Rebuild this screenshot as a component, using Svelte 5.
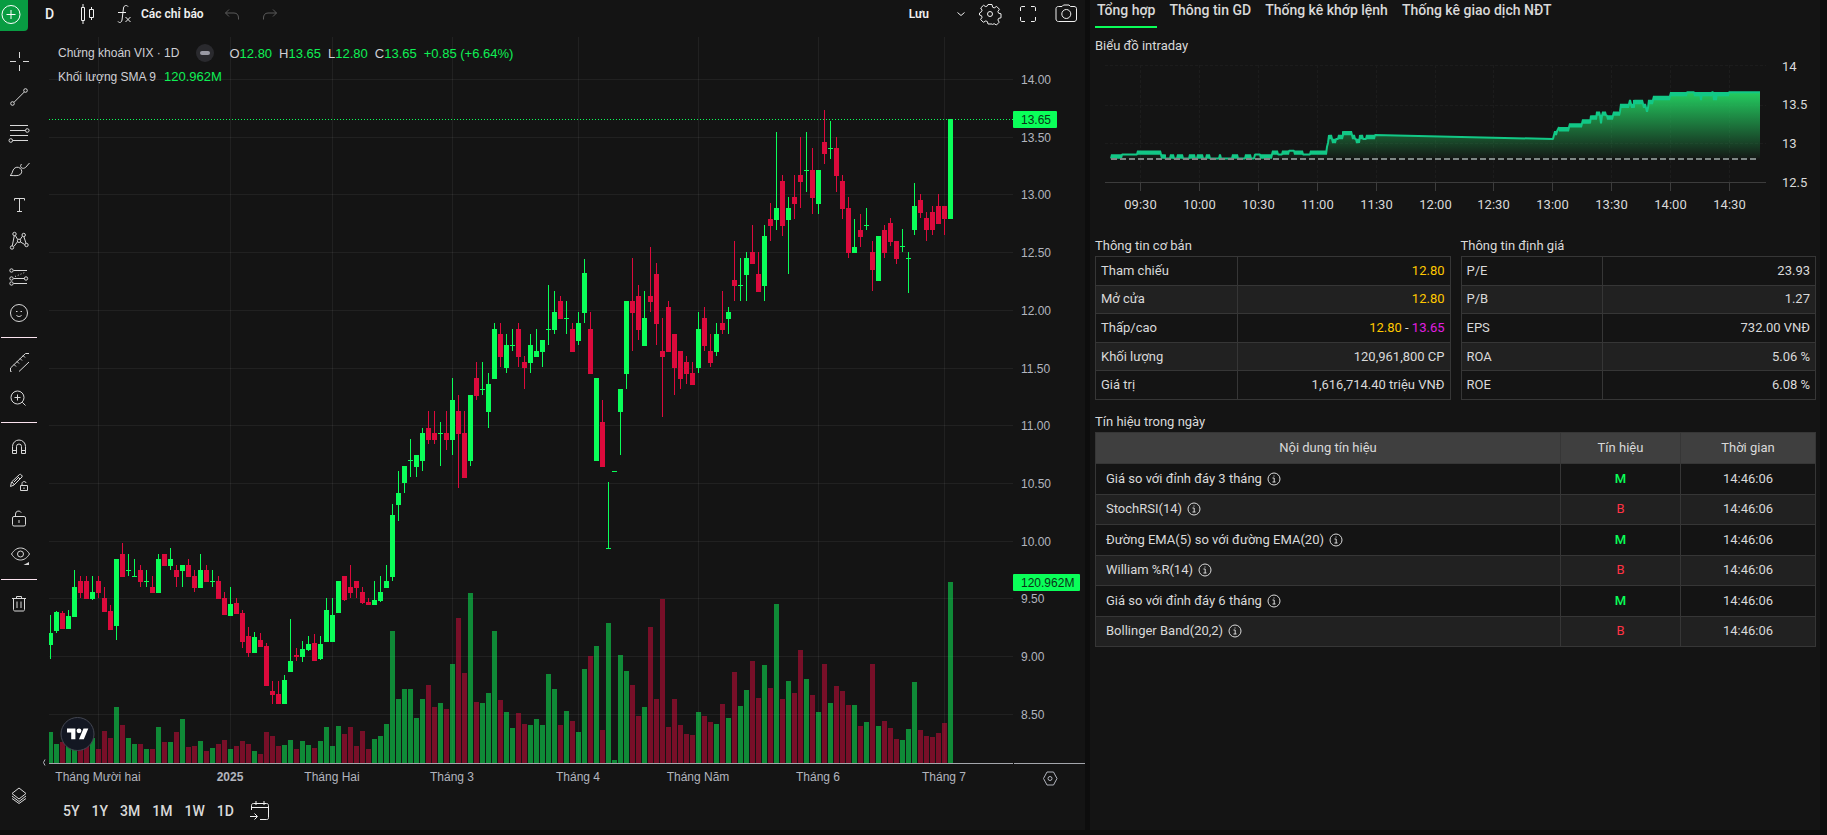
<script lang="ts">
	type Candle = [up: number, high: number, top: number, bottom: number, low: number, volume: number];

	const candles: Candle[] = [
		[1, 615, 633, 645, 659, 732], [1, 611, 612, 631, 633, 744], [0, 611, 613, 629, 629, 742], [1, 610, 616, 629, 629, 738],
		[1, 570, 587, 617, 617, 746], [0, 576, 581, 593, 598, 748], [0, 576, 581, 599, 599, 744], [1, 576, 592, 599, 600, 738],
		[0, 576, 581, 593, 598, 749], [0, 587, 598, 612, 612, 731], [0, 605, 611, 630, 630, 738], [1, 559, 559, 626, 640, 707],
		[0, 543, 554, 577, 577, 725], [1, 554, 570, 571, 576, 738], [1, 559, 576, 577, 577, 744], [0, 565, 570, 582, 587, 744],
		[1, 570, 581, 582, 587, 749], [0, 576, 587, 593, 593, 749], [1, 554, 559, 593, 593, 727], [0, 554, 554, 566, 566, 742],
		[1, 548, 559, 566, 570, 742], [0, 565, 570, 577, 587, 732], [1, 565, 565, 571, 587, 719], [0, 559, 565, 577, 577, 747],
		[0, 570, 576, 588, 592, 746], [1, 554, 570, 588, 588, 741], [0, 565, 570, 582, 582, 751], [1, 570, 581, 582, 587, 748],
		[0, 576, 581, 599, 599, 744], [0, 592, 598, 615, 615, 740], [1, 587, 604, 616, 616, 749], [0, 598, 603, 614, 614, 746],
		[0, 610, 613, 642, 648, 741], [0, 627, 636, 653, 657, 744], [1, 632, 637, 653, 653, 751], [0, 633, 640, 647, 647, 754],
		[0, 643, 646, 686, 686, 732], [0, 681, 691, 695, 704, 736], [0, 681, 694, 704, 704, 746], [1, 675, 680, 704, 704, 745],
		[1, 619, 661, 672, 672, 740], [0, 648, 655, 657, 661, 749], [1, 641, 649, 657, 662, 741], [1, 636, 644, 650, 651, 745],
		[0, 634, 643, 661, 661, 748], [1, 636, 644, 659, 660, 741], [1, 598, 610, 642, 642, 727], [1, 598, 615, 642, 642, 746],
		[1, 581, 581, 613, 613, 726], [0, 576, 576, 600, 601, 734], [0, 565, 587, 593, 598, 727], [0, 581, 581, 588, 598, 746],
		[0, 587, 592, 603, 604, 731], [0, 598, 602, 605, 605, 749], [1, 581, 600, 605, 605, 739], [1, 576, 592, 601, 602, 736],
		[1, 565, 581, 588, 588, 724], [1, 504, 515, 577, 581, 631], [1, 471, 493, 505, 521, 699], [1, 466, 466, 483, 493, 689],
		[1, 439, 460, 461, 477, 689], [1, 455, 455, 467, 477, 718], [1, 428, 433, 461, 471, 699], [0, 411, 428, 440, 444, 685],
		[0, 411, 433, 440, 444, 707], [1, 422, 433, 434, 466, 703], [0, 411, 433, 440, 450, 709], [1, 378, 400, 440, 455, 664],
		[0, 395, 411, 434, 488, 618], [0, 411, 433, 478, 478, 673], [1, 395, 395, 461, 466, 593], [0, 362, 378, 396, 400, 702],
		[1, 362, 389, 390, 395, 703], [1, 373, 384, 412, 428, 693], [1, 323, 329, 379, 379, 631], [0, 323, 334, 357, 367, 700],
		[1, 334, 345, 368, 373, 712], [1, 329, 345, 346, 351, 728], [0, 323, 329, 357, 367, 713], [0, 356, 362, 368, 389, 724],
		[1, 334, 345, 363, 373, 725], [1, 329, 351, 357, 357, 719], [1, 340, 340, 352, 367, 725], [1, 285, 329, 330, 345, 674],
		[1, 291, 312, 330, 334, 689], [0, 296, 301, 319, 319, 725], [1, 301, 318, 319, 334, 711], [0, 323, 329, 352, 352, 721],
		[1, 312, 323, 341, 345, 732], [1, 259, 273, 313, 323, 669], [0, 312, 329, 374, 374, 656], [1, 378, 378, 461, 461, 646],
		[0, 400, 422, 467, 467, 730], [1, 482, 548, 549, 549, 623], [1, 471, 471, 472, 472, 760], [1, 389, 389, 412, 455, 655],
		[1, 301, 301, 374, 389, 671], [0, 258, 301, 313, 351, 685], [0, 285, 296, 330, 340, 716], [1, 291, 318, 346, 346, 707],
		[0, 247, 296, 302, 312, 627], [0, 263, 274, 324, 345, 699], [0, 318, 351, 357, 417, 599], [0, 301, 307, 352, 352, 727],
		[0, 334, 334, 368, 395, 699], [0, 351, 351, 379, 389, 725], [0, 356, 362, 374, 384, 734], [0, 362, 373, 385, 385, 735],
		[1, 312, 329, 368, 373, 712], [0, 307, 318, 346, 351, 716], [0, 334, 351, 363, 367, 722], [1, 323, 334, 352, 356, 724],
		[0, 291, 323, 330, 334, 704], [1, 307, 312, 319, 334, 718], [0, 241, 280, 286, 301, 672], [1, 258, 285, 286, 301, 706],
		[1, 252, 258, 275, 301, 690], [0, 225, 252, 264, 264, 661], [0, 252, 274, 292, 292, 698], [1, 225, 236, 286, 301, 665],
		[0, 203, 219, 226, 241, 688], [1, 132, 208, 220, 230, 604], [0, 175, 181, 226, 236, 699], [1, 197, 208, 220, 274, 681],
		[0, 175, 197, 204, 219, 693], [0, 137, 175, 182, 208, 650], [1, 132, 170, 171, 192, 679], [0, 148, 170, 198, 214, 695],
		[1, 170, 170, 204, 214, 712], [0, 110, 142, 154, 164, 664], [1, 121, 148, 149, 159, 703], [0, 137, 148, 176, 192, 686],
		[0, 175, 181, 209, 219, 691], [0, 197, 208, 253, 258, 705], [1, 219, 247, 253, 253, 705], [0, 214, 230, 237, 247, 726],
		[1, 208, 225, 226, 230, 722], [0, 241, 252, 270, 291, 664], [1, 236, 236, 281, 281, 726], [0, 225, 230, 253, 258, 721],
		[0, 218, 223, 242, 246, 728], [0, 241, 241, 259, 264, 739], [1, 229, 246, 247, 252, 740], [1, 252, 258, 259, 293, 729],
		[1, 183, 206, 230, 235, 682], [0, 194, 200, 213, 218, 730], [0, 212, 218, 230, 241, 736], [0, 206, 212, 230, 235, 737],
		[0, 194, 206, 224, 224, 733], [0, 206, 206, 219, 235, 723], [1, 119, 119, 219, 219, 582]
	];

	const priceTicks = [
		{ y: 79, label: '14.00' },
		{ y: 137, label: '13.50' },
		{ y: 194, label: '13.00' },
		{ y: 252, label: '12.50' },
		{ y: 310, label: '12.00' },
		{ y: 368, label: '11.50' },
		{ y: 425, label: '11.00' },
		{ y: 483, label: '10.50' },
		{ y: 541, label: '10.00' },
		{ y: 598, label: '9.50' },
		{ y: 656, label: '9.00' },
		{ y: 714, label: '8.50' }
	];

	const months = [
		{ x: 98, label: 'Tháng Mười hai' },
		{ x: 230, label: '2025', bold: true },
		{ x: 332, label: 'Tháng Hai' },
		{ x: 452, label: 'Tháng 3' },
		{ x: 578, label: 'Tháng 4' },
		{ x: 698, label: 'Tháng Năm' },
		{ x: 818, label: 'Tháng 6' },
		{ x: 944, label: 'Tháng 7' }
	];

	const ohlc = [
		['O', '12.80'],
		['H', '13.65'],
		['L', '12.80'],
		['C', '13.65']
	];

	const ranges = ['5Y', '1Y', '3M', '1M', '1W', '1D'];
	const tabs = ['Tổng hợp', 'Thông tin GD', 'Thống kê khớp lệnh', 'Thống kê giao dịch NĐT'];
	let activeTab = $state(0);

	// [from x, to x, ticks above reference, alternate tick]
	const morning = [
		[1111, 1122, 0, 1], [1122, 1137, 1, 1], [1137, 1161, 1, 2], [1162, 1165, 0, 1], [1165, 1170, 0, 0],
		[1171, 1174, 1, 0], [1174, 1177, 0, 0], [1178, 1182, 1, 0], [1183, 1189, 0, 0], [1190, 1194, 1, 0],
		[1195, 1197, 0, 0], [1198, 1203, 1, 0], [1204, 1206, 0, 0], [1207, 1209, 1, 0], [1210, 1219, 0, 0],
		[1220, 1221, 1, 0], [1222, 1232, 0, 0], [1233, 1238, 1, 0], [1239, 1245, 0, 0], [1246, 1251, 1, 0],
		[1252, 1254, 0, 0], [1255, 1260, 1, 1], [1261, 1272, 0, 1], [1273, 1278, 2, 1], [1279, 1282, 1, 1],
		[1283, 1288, 2, 1], [1289, 1294, 2, 2], [1295, 1302, 1, 2], [1303, 1310, 1, 1], [1311, 1326, 2, 1],
		[1327, 1328, 3, 4], [1329, 1332, 6, 5], [1333, 1335, 4, 5], [1336, 1338, 5, 5], [1339, 1343, 6, 5],
		[1343, 1351, 7, 6], [1352, 1355, 6, 5], [1356, 1359, 5, 4], [1360, 1363, 6, 5], [1364, 1366, 5, 5],
		[1367, 1375, 6, 5]
	];
	const afternoon = [
		[1553, 1554, 5, 6], [1555, 1557, 7, 6], [1559, 1569, 8, 7], [1570, 1582, 9, 8], [1583, 1590, 10, 9],
		[1591, 1596, 11, 10], [1597, 1599, 12, 11], [1600, 1602, 11, 9], [1603, 1606, 12, 11], [1607, 1613, 11, 10],
		[1614, 1620, 12, 11], [1621, 1629, 14, 13], [1630, 1631, 15, 14], [1632, 1634, 13, 14], [1634, 1642, 15, 14],
		[1643, 1645, 14, 13], [1646, 1648, 13, 12], [1649, 1653, 15, 14], [1654, 1670, 16, 15], [1671, 1687, 17, 16],
		[1688, 1693, 17, 17], [1694, 1699, 17, 16], [1700, 1701, 17, 15], [1702, 1712, 17, 16], [1713, 1716, 17, 15],
		[1717, 1728, 17, 16], [1729, 1760, 17, 17]
	];

	function tracePoints(list: number[][]) {
		const points: string[] = [];
		for (const [from, to, a, b] of list) {
			for (let x = from; x <= to; x++) {
				points.push(`${x},${158.5 - 3.9 * ((x - from) % 2 ? b : a)}`);
			}
		}
		return points.join(' ');
	}

	const intraday = tracePoints(morning) + ' ' + tracePoints(afternoon);

	const times = ['09:30', '10:00', '10:30', '11:00', '11:30', '12:00', '12:30', '13:00', '13:30', '14:00', '14:30'];
	const timeX = (i: number) => Math.round(1140 + i * 58.9) + 0.5;
	const levels = [
		{ y: 65, text: 71, label: '14' },
		{ y: 105, text: 109, label: '13.5' },
		{ y: 143, text: 148, label: '13' },
		{ y: 182, text: 187, label: '12.5' }
	];

	const valuation = [
		['P/E', '23.93'],
		['P/B', '1.27'],
		['EPS', '732.00 VNĐ'],
		['ROA', '5.06 %'],
		['ROE', '6.08 %']
	];

	const signals = [
		{ name: 'Giá so với đỉnh đáy 3 tháng', signal: 'M' },
		{ name: 'StochRSI(14)', signal: 'B' },
		{ name: 'Đường EMA(5) so với đường EMA(20)', signal: 'M' },
		{ name: 'William %R(14)', signal: 'B' },
		{ name: 'Giá so với đỉnh đáy 6 tháng', signal: 'M' },
		{ name: 'Bollinger Band(20,2)', signal: 'B' }
	];
</script>

{#snippet tool(label: string, shape: any)}
	<button class="tool" aria-label={label}>
		<svg class="icon" viewBox="0 0 28 28">{@render shape()}</svg>
	</button>
{/snippet}

{#snippet cross()}<path d="M14.5 5v6M14.5 18v6M5 14.5h6M18 14.5h6" />{/snippet}
{#snippet trend()}
	<path d="M9 19.3 19.3 9" />
	<circle cx="20.5" cy="7.5" r="1.8" /><circle cx="7.5" cy="20.5" r="1.8" />
{/snippet}
{#snippet fib()}
	<path d="M5 6.5h18M5 11.5h15.5M5 16.5h18M7.5 21.5H23" />
	<circle cx="22.3" cy="11.5" r="1.8" /><circle cx="5.8" cy="21.5" r="1.8" />
{/snippet}
{#snippet brush()}
	<path d="M5 20.5c2.4-1 2-4 3.7-6.4 1.6-2.2 4.5-2.5 6.5-.8s2 4.3.3 6c-2.3 2-6 1.2-10.5 1.2zM16.5 9c-1.5 1.5-1 4 .5 4M24.5 8l-4 4.5c-1.5 1-3 1-3.5.5" />
{/snippet}
{#snippet letter()}<path d="M9.5 9.5v-2h10v2M14.5 7.5v13M12 20.5h5" />{/snippet}
{#snippet pattern()}
	<path d="m7.3 18.8 2-10.2M10.3 8.5l2.4 4M15 12.8l2.3-3.5M18.9 9.8l2.2 6.7M9 19.3l3.5-4.5M15.2 14.8l4.5 2.7" />
	<circle cx="9.5" cy="7" r="1.7" /><circle cx="18.7" cy="8" r="1.7" /><circle cx="7" cy="20.5" r="1.7" />
	<circle cx="21.5" cy="18" r="1.7" /><circle cx="14" cy="13.8" r="1.7" />
{/snippet}
{#snippet forecast()}
	<path d="M8.5 7.5H22M8.5 15.5h11M8.5 20.5H22" />
	<path d="M10 13.5 21 9" stroke-dasharray="1 2" />
	<circle cx="6.5" cy="7.5" r="1.7" /><circle cx="6.5" cy="15.5" r="1.7" />
	<circle cx="6.5" cy="20.5" r="1.7" /><circle cx="21" cy="15.5" r="1.7" />
{/snippet}
{#snippet smile()}
	<circle cx="14" cy="14" r="8.5" />
	<path d="M11 12.5h1.5M15.5 12.5H17M11.5 16c.5 2 4.5 2 5 0" />
{/snippet}
{#snippet ruler()}
	<path d="M5.5 20 20.5 5.5H24M5.5 20v3.5h1M14 23.5 24 14M9 16.5l2 2M12 13.5l2 2M15 10.5l2 2M18 7.5l2 2" />
{/snippet}
{#snippet zoomIn()}
	<circle cx="12.5" cy="13.5" r="6.5" />
	<path d="m17.3 18.3 3.2 3.2M12.5 10.5v6M9.5 13.5h6" />
{/snippet}
{#snippet magnet()}
	<path d="M7.5 20.5v-7a6.5 6.5 0 0 1 13 0v7h-4v-7a2.5 2.5 0 0 0-5 0v7zM7.5 17.5h4M16.5 17.5h4" />
{/snippet}
{#snippet pencilLock()}
	<path d="M5.5 17.5 6.5 13 14.5 5.5c1-1 3.5 1.5 2.5 2.5l-8 8zM7 13l2.5 3M12.5 7.5l2.5 2.5M9 13l5-5" />
	<path d="M15.5 16.5h7v5h-7zM17 16.5v-2c0-2.5 4-2.5 4-.5M19 18.5v1.5" />
{/snippet}
{#snippet lock()}
	<rect x="7.5" y="11.5" width="13" height="9.5" rx="1.5" />
	<path d="M10.5 11.5V9a3 3 0 0 1 5.7-1.3M14 15v3" />
{/snippet}
{#snippet eye()}
	<path d="M6.5 13c2.5-4 5.5-6 9-6s6.5 2 9 6c-2.5 4-5.5 6-9 6s-6.5-2-9-6z" />
	<circle cx="15.5" cy="13" r="3" />
	<path d="m18.5 24 5.5-3v3z" fill="currentColor" stroke="none" />
{/snippet}
{#snippet trash()}
	<path d="M7 8.5h14M11.5 8.5v-2h5v2M8.5 8.5v11c0 1 .5 1.5 1.5 1.5h8c1 0 1.5-.5 1.5-1.5v-11M12 11.5v6.5M16 11.5v6.5" />
{/snippet}
{#snippet layers()}
	<path d="m7 11.5 7-5.5 7 5.5-7 5.5zM7 14l7 5.5 7-5.5M7 16.5l7 5 7-5" />
{/snippet}

<main>
	<section class="chart">
		<header class="toolbar">
			<button class="add" aria-label="Thêm mã">
				<svg class="icon" viewBox="0 0 28 28">
					<circle cx="11" cy="14.5" r="9" /><path d="M11 10v9M6.5 14.5h9" />
				</svg>
			</button>
			<button class="interval">D</button>
			<button aria-label="Kiểu biểu đồ">
				<svg class="icon" viewBox="0 0 28 28">
					<path d="M8.5 7.5h3v13h-3zM10 4v3.5M10 20.5V24M16.5 9.5h4v8h-4zM18.5 7v2.5M18.5 17.5V20" />
				</svg>
			</button>
			<button class="indicators">
				<svg class="icon" viewBox="0 0 28 28">
					<path d="M18 6.5c-1-1.5-4-1.5-4.5 1.5l-1.5 12c-.5 3-3 3-4 1.5M8 12.5h8" />
					<path d="m15.5 17 5 5M20.5 17l-5 5" />
				</svg>
				Các chỉ báo
			</button>
			<button class="history undo" aria-label="Hoàn tác">
				<svg class="icon" viewBox="0 0 28 28"><path d="M11 9.5 7.5 13l3.5 3.5M7.5 13H16c3 0 4.5 2 4.5 5v1.5" /></svg>
			</button>
			<button class="history" aria-label="Làm lại">
				<svg class="icon" viewBox="0 0 28 28"><path d="m17 9.5 3.5 3.5-3.5 3.5M20.5 13H12c-3 0-4.5 2-4.5 5v1.5" /></svg>
			</button>
			<button class="save">Lưu</button>
			<button class="more" aria-label="Mở danh sách">
				<svg class="icon" viewBox="7 0 14 28"><path d="m10.5 12.5 3.5 3 3.5-3" /></svg>
			</button>
			<div class="actions">
				<button aria-label="Cài đặt">
					<svg class="icon" viewBox="0 0 28 28">
						<path d="M12 4.5h4l.6 2.7 1.6.7 2.4-1.5 2.8 2.8-1.5 2.4.7 1.6 2.4.6v4l-2.4.6-.7 1.6 1.3 2.2-2.8 2.8-2.2-1.3-1.6.7L16 24h-4l-.6-2.4-1.6-.7-2.4 1.4-2.8-2.8 1.5-2.3-.7-1.6L3.500 15v-2l1.9-1.2.7-1.6L4.7 8l2.8-2.7 2.3 1.3 1.6-.7z" />
						<circle cx="14" cy="14" r="2.5" />
					</svg>
				</button>
				<button aria-label="Toàn màn hình">
					<svg class="icon" viewBox="0 0 28 28">
						<path d="M6.5 11V8c0-1 .5-1.5 1.5-1.5h3M17 6.5h3c1 0 1.5.5 1.5 1.5v3M21.5 17v3c0 1-.5 1.5-1.5 1.5h-3M11 21.5H8c-1 0-1.5-.5-1.5-1.5v-3" />
					</svg>
				</button>
				<button aria-label="Chụp ảnh">
					<svg class="icon" viewBox="0 0 28 28">
						<path d="M10 6.5 11.5 5H17l1.5 1.5H22c1.5 0 2.5 1 2.5 2V19c0 1.5-1 2.5-2.5 2.5H6.5C5 21.5 4 20.5 4 19V8.500c0-1 1-2 2.5-2z" />
						<circle cx="14.3" cy="14" r="4.5" />
					</svg>
				</button>
			</div>
		</header>

		<div class="workspace">
			<nav class="tools" aria-label="Công cụ vẽ">
				{@render tool('Con trỏ', cross)}
				{@render tool('Đường xu hướng', trend)}
				{@render tool('Fibonacci', fib)}
				{@render tool('Cọ vẽ', brush)}
				{@render tool('Văn bản', letter)}
				{@render tool('Mẫu hình', pattern)}
				{@render tool('Dự báo', forecast)}
				{@render tool('Biểu tượng', smile)}
				<hr />
				{@render tool('Đo', ruler)}
				{@render tool('Phóng to', zoomIn)}
				<hr />
				{@render tool('Nam châm', magnet)}
				{@render tool('Giữ chế độ vẽ', pencilLock)}
				{@render tool('Khóa', lock)}
				{@render tool('Ẩn', eye)}
				<hr />
				{@render tool('Xóa', trash)}
				<div class="spacer"></div>
				{@render tool('Các lớp', layers)}
			</nav>

			<div class="plot">
				<div class="legend">
					<div class="legend-row">
						<span>Chứng khoán VIX · 1D</span>
						<span class="status"></span>
						<span class="ohlc">
							{#each ohlc as [key, value]}
								<span>{key}<b>{value}</b></span>
							{/each}
							<b>+0.85 (+6.64%)</b>
						</span>
					</div>
					<div class="legend-row volume">
						<span>Khối lượng SMA 9</span>
						<b>120.962M</b>
					</div>
				</div>

				<svg class="candles" viewBox="38 32 1047 760">
					<clipPath id="pane"><rect x="49" y="37" width="964" height="727" /></clipPath>
					{#each priceTicks as tick}
						<rect class="grid" x="49" y={tick.y} width="964" height="1" />
						<text class="axis" x="1021" y={tick.y + 5}>{tick.label}</text>
					{/each}
					{#each months as month}
						<rect class="grid" x={month.x} y="37" width="1" height="726" />
						<text class="axis" class:bold={month.bold} x={month.x} y="781" text-anchor="middle">{month.label}</text>
					{/each}
					<g clip-path="url(#pane)">
						{#each candles as [up, high, top, bottom, low, volume], i}
							<g class={up ? 'up' : 'down'}>
								<rect class="volume-bar" x={48 + i * 6} y={volume} width="5" height={763 - volume} />
								<rect x={50 + i * 6} y={high} width="1" height={low - high} />
								<rect x={48 + i * 6} y={top} width="5" height={bottom - top} />
							</g>
						{/each}
					</g>
					<path class="last-price" d="M49 119.5h964" />
					<path class="base" d="M49 763.5h964M1014 763.5h71" />
					<rect class="tag" x="1013" y="111" width="44" height="17" rx="1" />
					<text class="tag-text" x="1021" y="124">13.65</text>
					<rect class="tag" x="1013" y="574" width="67" height="17" rx="1" />
					<text class="tag-text" x="1021" y="587">120.962M</text>
					<path class="outline" d="M45 759.5q-3 3 0 6" />
					<g class="outline">
						<path d="m1043.5 778.5 3.5-6.5h6.5l3.5 6.5-3.5 6.5h-6.5z" />
						<circle cx="1050" cy="778.5" r="2" />
					</g>
					<circle class="logo-disc" cx="77.5" cy="734" r="16.5" />
					<g class="logo" transform="translate(67 726) scale(0.6)">
						<path d="M14 22H7V11H0V4h14zM28 22h-8l7.5-18h8z" /><circle cx="20" cy="8" r="4" />
					</g>
				</svg>

				<div class="ranges">
					{#each ranges as range}
						<button>{range}</button>
					{/each}
					<button class="goto" aria-label="Đi đến ngày">
						<svg class="icon" viewBox="0 0 28 28">
							<path d="M5.5 13V8.5c0-1 .5-2 2-2h13c1.5 0 2 1 2 2v12c0 1.5-.5 2-2 2H14M5.5 10.5h17M10 4v4M18 4v4M4 19.5h7M8.5 16.5l3 3-3 3" />
						</svg>
					</button>
				</div>
			</div>
		</div>
	</section>

	<aside class="side">
		<div class="tabs" role="tablist">
			{#each tabs as tab, i}
				<button role="tab" aria-selected={activeTab === i} class:active={activeTab === i} onclick={() => (activeTab = i)}>
					{tab}
				</button>
			{/each}
		</div>

		<h2 class="first">Biểu đồ intraday</h2>
		<svg class="intraday" viewBox="1095 56 721 174">
			<defs>
				<linearGradient id="area" x1="0" y1="92" x2="0" y2="158" gradientUnits="userSpaceOnUse">
					<stop offset="0" stop-color="#24cc60" />
					<stop offset="1" stop-color="#24cc60" stop-opacity="0.04" />
				</linearGradient>
			</defs>
			{#each levels as level, i}
				{#if i < 3}
					<path class="faint" d="M1105 {level.y + 0.5}h661" />
				{/if}
				<text x="1782" y={level.text}>{level.label}</text>
			{/each}
			{#each times as time, i}
				<path class="faint" d="M{timeX(i)} 65v117" />
				<path class="tick" d="M{timeX(i)} 183v8" />
				<text x={timeX(i)} y="209" text-anchor="middle">{time}</text>
			{/each}
			<path class="tick" d="M1105 182.5h661" />
			<polygon points="1111,158.5 {intraday} 1760,158.5" fill="url(#area)" />
			<polyline points={intraday} />
			<path class="reference" d="M1111 159h648" />
		</svg>

		<div class="columns">
			<div>
				<h2>Thông tin cơ bản</h2>
				<table class="facts">
					<tbody>
						<tr><th scope="row">Tham chiếu</th><td class="yellow">12.80</td></tr>
						<tr><th scope="row">Mở cửa</th><td class="yellow">12.80</td></tr>
						<tr>
							<th scope="row">Thấp/cao</th>
							<td><span class="yellow">12.80</span> - <span class="purple">13.65</span></td>
						</tr>
						<tr><th scope="row">Khối lượng</th><td>120,961,800 CP</td></tr>
						<tr><th scope="row">Giá trị</th><td>1,616,714.40 triệu VNĐ</td></tr>
					</tbody>
				</table>
			</div>
			<div>
				<h2>Thông tin định giá</h2>
				<table class="facts">
					<tbody>
						{#each valuation as [name, value]}
							<tr><th scope="row">{name}</th><td>{value}</td></tr>
						{/each}
					</tbody>
				</table>
			</div>
		</div>

		<h2 class="signals-title">Tín hiệu trong ngày</h2>
		<table class="signals">
			<thead>
				<tr>
					<th>Nội dung tín hiệu</th>
					<th class="signal">Tín hiệu</th>
					<th class="time">Thời gian</th>
				</tr>
			</thead>
			<tbody>
				{#each signals as row}
					<tr>
						<td>
							<span class="name">
								{row.name}
								<svg class="info" viewBox="0 0 14 14">
									<circle cx="7" cy="7" r="6" /><path d="M5.5 6h1.7v4M5.5 10h3M6.5 4h1" />
								</svg>
							</span>
						</td>
						<td class={row.signal === 'M' ? 'buy' : 'sell'}>{row.signal}</td>
						<td>14:46:06</td>
					</tr>
				{/each}
			</tbody>
		</table>
	</aside>
</main>

<style>
	:global(body) {
		background: #0d0d0d;
	}

	main {
		display: grid;
		grid-template-columns: minmax(0, 1085fr) minmax(0, 730fr);
		gap: 5px;
		padding: 0 7px 5px 0;
		font-family: Roboto, 'Liberation Sans', sans-serif;
		font-size: 13px;
		line-height: 20px;
		color: #d9d9d9;
	}

	.chart,
	.side {
		background: #141414;
	}

	button {
		display: flex;
		align-items: center;
		justify-content: center;
		padding: 0;
		border: 0;
		background: none;
		color: inherit;
		font: inherit;
		cursor: pointer;
	}

	.icon {
		flex: none;
		height: 28px;
		fill: none;
		stroke: currentColor;
		stroke-width: 1;
	}

	.toolbar {
		display: flex;
		align-items: flex-start;
		height: 32px;
		color: #f0f0f0;
		font-size: 12px;
		font-weight: 600;
	}

	.toolbar button {
		height: 28px;
	}

	.toolbar .add {
		width: 28px;
		height: 31px;
		align-items: flex-start;
		border-radius: 0 0 4px 0;
		background: #089c42;
		color: #fff;
	}

	.toolbar .interval {
		width: 15px;
		margin: 0 16px 0 14px;
		font-size: 14px;
		font-weight: 500;
	}

	.indicators {
		gap: 3px;
		margin-left: 9px;
	}

	.history {
		margin-left: 10px;
		color: #5a5a5a;
	}

	.undo {
		margin-left: 14px;
	}

	.save {
		margin-left: auto;
	}

	.more {
		margin: 0 8px 0 25px;
	}

	.actions {
		display: flex;
		gap: 10px;
		padding-right: 5px;
	}

	.workspace {
		display: flex;
	}

	.tools {
		display: flex;
		flex-direction: column;
		flex: none;
		width: 38px;
		padding: 11px 0 16px;
		box-sizing: border-box;
	}

	.tool {
		height: 36px;
	}

	hr {
		width: 36px;
		height: 1px;
		margin: 6px 1px;
		border: 0;
		background: #fbe3ef;
	}

	.spacer {
		flex: 1;
	}

	.plot {
		position: relative;
		flex: 1;
		min-width: 0;
	}

	.legend {
		position: absolute;
		top: 11px;
		left: 20px;
		color: #d0d0d4;
		font-family: 'Liberation Sans', Arial, sans-serif;
		font-size: 12px;
	}

	.legend-row {
		display: flex;
		align-items: center;
		height: 20px;
	}

	.legend-row b {
		color: #0ff055;
		font-size: 13px;
		font-weight: 400;
	}

	.status {
		display: flex;
		align-items: center;
		justify-content: center;
		width: 18px;
		height: 18px;
		margin: 0 15px 0 17px;
		border-radius: 50%;
		background: #2a2a2e;
	}

	.status::before {
		content: '';
		width: 10px;
		height: 4px;
		border-radius: 2px;
		background: #9a9aa4;
	}

	.ohlc {
		display: flex;
		gap: 7px;
		padding-top: 2px;
		font-size: 13px;
	}

	.volume {
		gap: 8px;
		margin-top: 4px;
	}

	.candles,
	.intraday {
		display: block;
		width: 100%;
	}

	.candles text {
		font-family: 'Liberation Sans', Arial, sans-serif;
		font-size: 12px;
	}

	.grid {
		fill: #fff;
		fill-opacity: 0.06;
	}

	.axis {
		fill: #b2b5be;
	}

	.bold {
		font-weight: 700;
	}

	.up {
		fill: #0aff59;
	}

	.down {
		fill: #dc0a3c;
	}

	.volume-bar {
		opacity: 0.5;
	}

	.last-price {
		stroke: #0aff59;
		stroke-dasharray: 1 2;
	}

	.base {
		stroke: #a4a6ac;
	}

	.tag {
		fill: #0aff59;
	}

	.tag-text {
		fill: #0b3317;
	}

	.outline {
		fill: none;
		stroke: #b2b5be;
	}

	.logo-disc {
		fill: #131722;
		stroke: #434651;
	}

	.logo {
		fill: #fff;
	}

	.ranges {
		display: flex;
		align-items: center;
		gap: 12px;
		height: 38px;
		padding-left: 25px;
		font-size: 14px;
		font-weight: 500;
	}

	.goto {
		color: #f0f0f0;
	}

	.side {
		padding: 0 4px 0 5px;
	}

	.tabs {
		display: flex;
		gap: 10px;
		font-size: 14px;
		font-weight: 500;
	}

	.tabs button {
		height: 28px;
		padding: 0 2px 6px;
		border-bottom: 2px solid transparent;
		white-space: nowrap;
	}

	.tabs .active {
		border-color: #0aff59;
	}

	h2 {
		margin: 0;
		font-size: 13px;
		font-weight: 400;
		line-height: 20px;
	}

	.first {
		margin-top: 8px;
	}

	.intraday text {
		fill: #d9d9d9;
		font-size: 13px;
	}

	.intraday polyline {
		fill: none;
		stroke: #12c886;
		stroke-width: 2;
		stroke-linejoin: bevel;
	}

	.faint {
		stroke: #1c1c1c;
		stroke-dasharray: 3 2;
	}

	.tick {
		stroke: #3c3c3c;
	}

	.reference {
		stroke: #7f8886;
		stroke-width: 2;
		stroke-dasharray: 6 3;
	}

	.columns {
		display: grid;
		grid-template-columns: 1fr 1fr;
		gap: 10px;
		padding-top: 6px;
	}

	table {
		width: 100%;
		border-collapse: collapse;
		table-layout: fixed;
	}

	th,
	td {
		padding: 3px 5px;
		border: 1px solid #363636;
		font-weight: 400;
	}

	.facts {
		height: 144px;
	}

	.facts th {
		width: 40%;
		box-sizing: border-box;
		text-align: left;
	}

	.facts td {
		text-align: right;
	}

	tbody tr:nth-child(even) {
		background: #212121;
	}

	.yellow {
		color: #ffc800;
	}

	.purple {
		color: #e01fe0;
	}

	.signals-title {
		margin-top: 12px;
	}

	.signals {
		height: 215px;
		text-align: center;
	}

	.signals th,
	.signals td {
		padding-top: 4px;
		padding-bottom: 4px;
	}

	.signals th {
		padding-top: 5px;
		padding-bottom: 5px;
	}

	.signals thead {
		background: #3f3f3f;
	}

	.signal {
		width: 109px;
	}

	.time {
		width: 124px;
	}

	.signals td:first-child {
		padding-left: 10px;
		text-align: left;
	}

	.name {
		display: flex;
		align-items: center;
		gap: 5px;
	}

	.info {
		width: 14px;
		height: 14px;
		fill: none;
		stroke: currentColor;
	}

	.buy {
		color: #0aff59;
		font-weight: 500;
	}

	.sell {
		color: #ff3344;
	}
</style>
